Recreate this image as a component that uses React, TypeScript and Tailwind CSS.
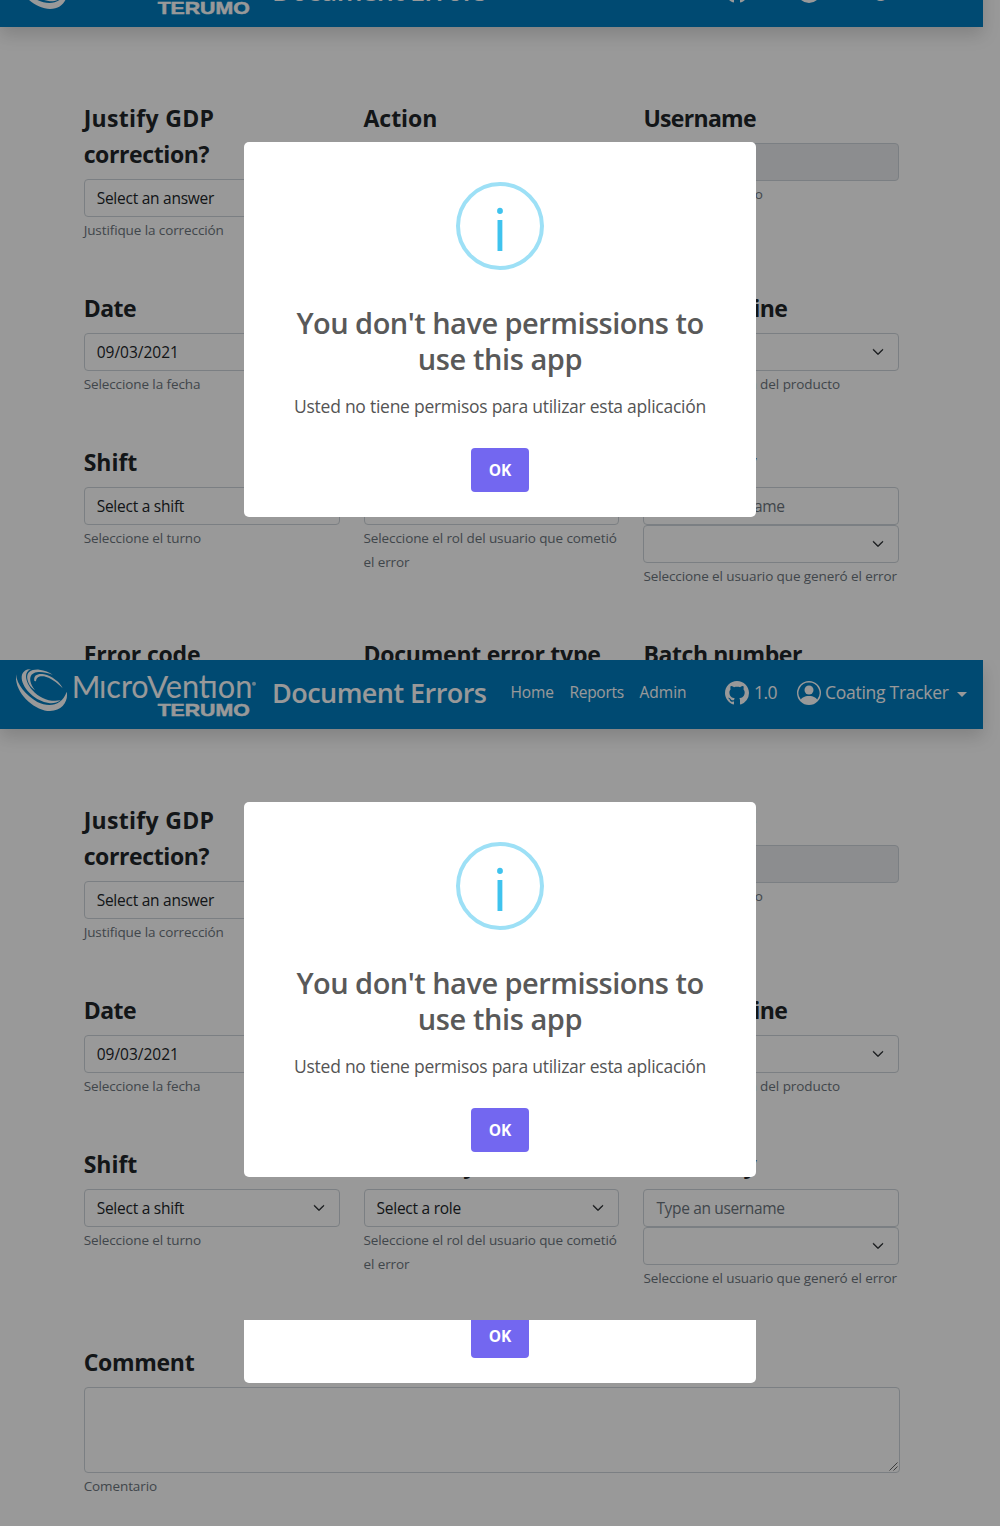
import type { ReactNode } from 'react'
import { BsChevronDown, BsGithub, BsPersonCircle } from 'react-icons/bs'

function Logo() {
  return (
    <svg className="h-[49px] w-[240px] shrink-0" viewBox="48 39 720 147" fill="#fff">
      <path d="M48 58 C50 88 78 122 112 141 C148 158 186 152 200 110 C206 136 188 168 150 168 C104 168 42 114 48 58Z" />
      <path d="M94 42 C70 50 76 80 96 104 C120 131 148 141 182 136 C172 144 156 146 146 144 C110 140 68 104 65 70 C64 52 76 42 94 42Z" />
      <path d="M82 72 C78 50 96 42 118 44 C134 46 148 51 158 59 C138 52 122 50 110 52 C97 54 89 62 91 78 C93 88 98 97 105 106 C91 96 85 86 82 72Z" />
      <path d="M103 78 C100 60 114 55 132 58 C156 63 180 82 188 100 C170 81 150 68 132 64 C118 62 109 66 108 79Z" />
      <g fontFamily="Lato, sans-serif">
        <text x="215" y="130" fontSize="91" textLength="86" lengthAdjust="spacingAndGlyphs">M</text>
        <text x="297" y="130" fontSize="96" textLength="149" lengthAdjust="spacingAndGlyphs">ıcro</text>
        <text x="441" y="130" fontSize="91" textLength="64" lengthAdjust="spacingAndGlyphs">V</text>
        <text x="497" y="130" fontSize="96" textLength="260" lengthAdjust="spacingAndGlyphs">entıon</text>
      </g>
      <circle cx="762" cy="86" r="6" opacity=".7" />
      <text x="473" y="182" fontSize="50" fontWeight="700" fontFamily="Liberation Sans, sans-serif" stroke="#fff" strokeWidth="1.5" textLength="276" lengthAdjust="spacingAndGlyphs">TERUMO</text>
    </svg>
  )
}

function Navbar() {
  return (
    <nav className="flex h-[69px] w-[983px] shrink-0 items-start bg-[#007cbf] pl-4 text-white shadow-[0_8px_16px_rgba(0,0,0,0.15)]">
      <div className="pt-2">
        <Logo />
      </div>
      <div className="ml-4 w-[229px] pt-3 text-[27px] leading-[42px] font-semibold tracking-[-0.55px]">Document Errors</div>
      <div className="ml-[9.5px] flex gap-4 pt-5 text-[15.5px] leading-6">
        <span className="w-[43px] tracking-[-0.15px]">Home</span>
        <span className="w-[54px] tracking-[-0.3px]">Reports</span>
        <span className="w-[47px]">Admin</span>
      </div>
      <div className="ml-[38.5px] flex items-center pt-[19px] text-[17.5px] leading-7">
        <BsGithub className="size-6" />
        <span className="-mt-px ml-[5px] w-[23px] tracking-[-0.6px]">1.0</span>
        <BsPersonCircle className="ml-5 size-6" />
        <span className="-mt-px ml-1 w-[126px] tracking-[-0.27px]">Coating Tracker</span>
        <span className="mt-1 ml-1.5 border-x-[5px] border-t-[5px] border-x-transparent border-t-white" />
      </div>
    </nav>
  )
}

function Field({ label, help, children }: { label: ReactNode; help?: ReactNode; children?: ReactNode }) {
  return (
    <div className="flex flex-col">
      <div className="-mt-px mb-[7px] text-[23px] leading-9 font-bold text-[#212529]">{label}</div>
      {children}
      <div className="pt-px text-[13.5px] leading-6 tracking-[-0.1px] text-[#6c757d]">{help}</div>
    </div>
  )
}

function Select({ children }: { children?: ReactNode }) {
  return (
    <div className="flex h-[38px] items-center justify-between rounded border border-[#ced4da] pr-3.5 pl-3 text-[15.5px] tracking-[-0.25px] text-[#212529]">
      <span className="pt-0.5">{children}</span>
      <BsChevronDown className="size-3 stroke-[#212529] stroke-1" />
    </div>
  )
}

function Form() {
  return (
    <div className="ml-[83.67px] grid w-[815.67px] grid-cols-3 gap-x-6 gap-y-[49px] pt-[74px]">
      <Field label={<><span className="tracking-[0.3px]">Justify GDP</span><br /><span className="tracking-[-0.38px]">correction?</span></>} help="Justifique la corrección">
        <Select>Select an answer</Select>
      </Field>
      <Field label={<span className="tracking-[-0.05px]">Action</span>} />
      <Field label={<span className="tracking-[-0.7px]">Username</span>} help={<span className="tracking-[-0.2px]">Nombre de usuario</span>}>
        <div className="h-[38px] rounded border border-[#ced4da] bg-[#e9ecef]" />
      </Field>

      <Field label={<span className="tracking-[-0.5px]">Date</span>} help="Seleccione la fecha">
        <Select><span className="tracking-normal">09/03/2021</span></Select>
      </Field>
      <div />
      <Field label={<><span className="tracking-[0.7px]">Product l</span><span className="tracking-[-0.6px]">ine</span></>} help={<span className="tracking-[-0.06px]">Seleccione la línea del producto</span>}>
        <Select />
      </Field>

      <Field label={<span>Shift</span>} help="Seleccione el turno">
        <Select>Select a shift</Select>
      </Field>
      <Field label={<span className="tracking-[-0.5px]">Caused by</span>} help="Seleccione el rol del usuario que cometió el error">
        <Select>Select a role</Select>
      </Field>
      <Field label={<span className="tracking-[-0.45px]">Caused by</span>} help="Seleccione el usuario que generó el error">
        <div className="flex h-[38px] items-center rounded border border-[#ced4da] px-3 pt-0.5 text-[15.5px] tracking-[-0.35px] text-[#6c757d]">
          Type an username
        </div>
        <Select />
      </Field>

      <Field label={<span className="tracking-[-0.2px]">Error code</span>} />
      <Field label={<span className="tracking-[-0.25px]">Document error type</span>} />
      <Field label={<span className="tracking-[-0.42px]">Batch number</span>} />
    </div>
  )
}

function Alert({ offset }: { offset: string }) {
  return (
    <div className="absolute inset-0 flex items-start justify-center overflow-hidden bg-black/40">
      <div className={`flex h-[375px] w-[512px] flex-col items-center rounded-[5px] bg-white pt-10 text-center text-[#545454] ${offset}`}>
        <div className="flex size-[88px] shrink-0 items-center justify-center rounded-full border-4 border-[#9de0f6] text-[59px] leading-[80px] font-medium text-[#3fc3ee]">
          <span className="h-[77px]">i</span>
        </div>
        <div className="mt-[35px] mb-px text-[29px] leading-9 font-semibold text-[#595959]">
          <div className="tracking-[-0.52px]">You don't have permissions to</div>
          <div className="tracking-[-0.42px]">use this app</div>
        </div>
        <div className="mt-[15px] text-[17.5px] leading-[27px] tracking-[-0.26px] whitespace-nowrap">
          Usted no tiene permisos para utilizar esta aplicación
        </div>
        <div className="mt-7 flex h-11 w-[58px] items-center justify-center rounded bg-[#7367f0] pt-0.5 text-[15.5px] font-bold text-white">OK</div>
      </div>
    </div>
  )
}

function Section({ height, offset, children }: { height: string; offset: string; children: ReactNode }) {
  return (
    <section className={`relative overflow-hidden bg-white ${height}`}>
      {children}
      <Alert offset={offset} />
    </section>
  )
}

export default function App() {
  return (
    <main className="h-[1526px] w-[1000px] overflow-hidden font-['Open_Sans',sans-serif]">
      <Section height="h-[660px]" offset="mt-[142px]">
        <div className="-mt-[42px]">
          <Navbar />
          <Form />
        </div>
      </Section>
      <Section height="h-[660px]" offset="mt-[142px]">
        <Navbar />
        <Form />
      </Section>
      <Section height="h-[206px]" offset="mt-[-312px]">
        <div className="ml-[83.67px] w-[816px] pt-[25px]">
          <Field label={<span className="tracking-[-0.3px]">Comment</span>} help="Comentario">
            <div className="flex h-[86px] items-end justify-end rounded border border-[#ced4da] p-px">
              <svg className="size-[9px]" viewBox="0 0 9 9" stroke="#555" strokeWidth="0.9">
                <path d="M0.5 8.5 L8.5 0.5 M4.5 8.5 L8.5 4.5" />
              </svg>
            </div>
          </Field>
        </div>
      </Section>
    </main>
  )
}
